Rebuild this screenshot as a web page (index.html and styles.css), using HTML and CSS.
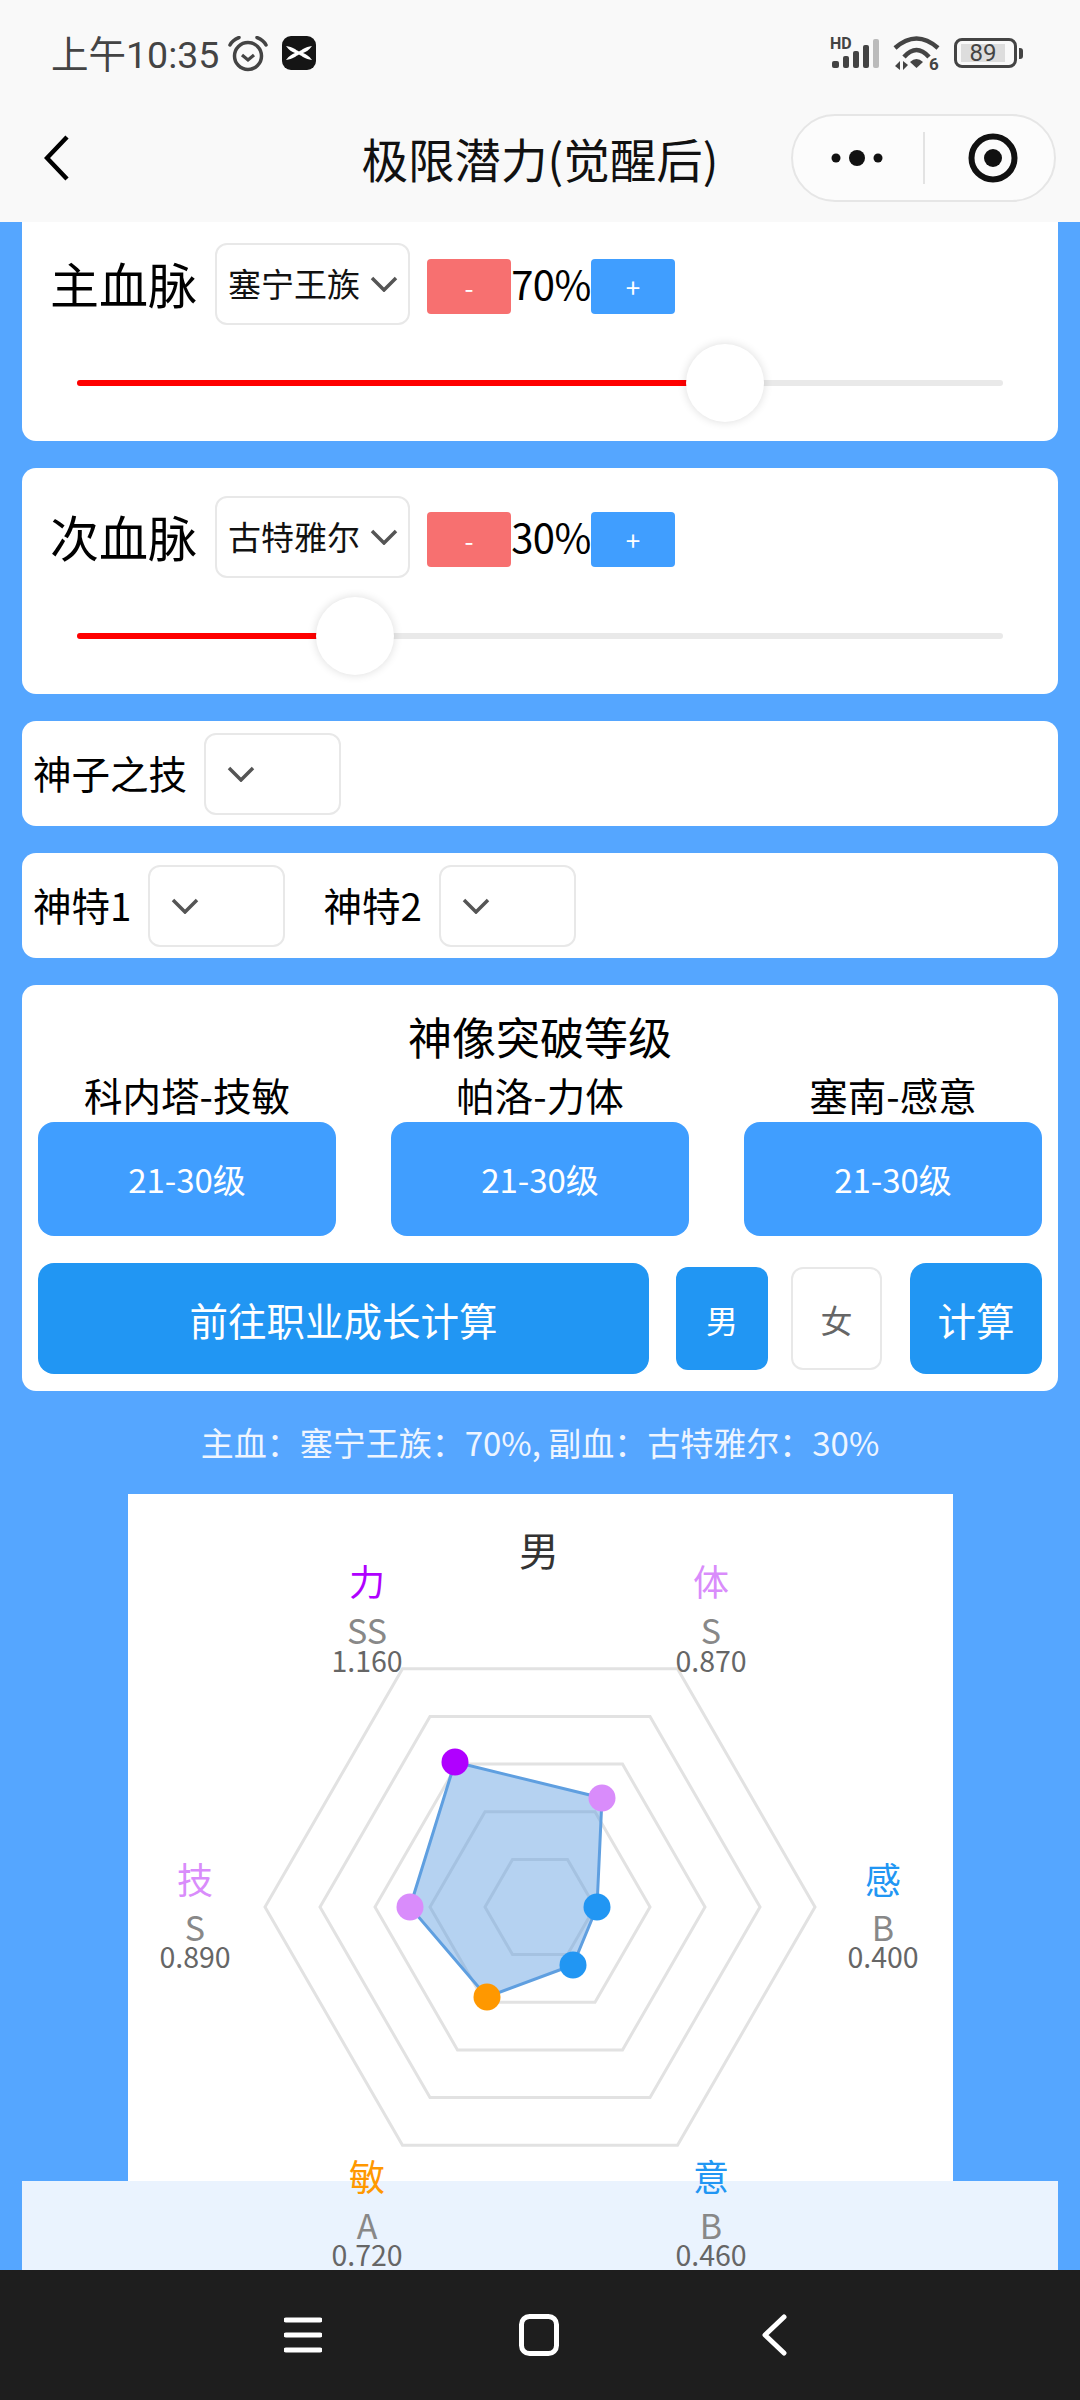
FILE: index.html
```html
<!DOCTYPE html>
<html lang="zh-CN">
<head>
<meta charset="utf-8">
<title>极限潜力(觉醒后)</title>
<link rel="stylesheet" href="styles.css">
</head>
<body>
<header class="header">
  <div class="status">
    <span class="time">上午10:35</span>
    <svg class="ic-alarm" viewBox="0 0 40 36" width="40" height="36"><circle cx="20" cy="20" r="13.500" fill="none" stroke="#444" stroke-width="3.500"/><path d="M14 19l6 5 6-5" fill="none" stroke="#444" stroke-width="3.200"/><path d="M2 9C4 5 7 3 11 1.500M38 9C36 5 33 3 29 1.500" fill="none" stroke="#444" stroke-width="3.500" stroke-linecap="round"/></svg>
    <svg class="ic-x" viewBox="0 0 34 34" width="34" height="34"><rect width="34" height="34" rx="9" fill="#151515"/><path d="M4 10C11 11 14 14 17 15.500C20 14 23 11 30 10C27 14 24 16 21 17C24 18 27 20 30 24C23 23 20 20 17 18.500C14 20 11 23 4 24C7 20 10 18 13 17C10 16 7 14 4 10Z" fill="#fff"/></svg>
    <div class="status-right">
      <svg class="ic-signal" viewBox="0 0 50 32" width="50" height="32"><text class="hd" x="0" y="12">HD</text><rect x="2" y="24" width="7" height="7" rx="2" fill="#444"/><rect x="13" y="19" width="6" height="12" rx="2" fill="#444"/><rect x="23" y="14" width="6" height="17" rx="2" fill="#444"/><rect x="33" y="8" width="6" height="23" rx="2" fill="#444"/><rect x="43" y="2" width="6" height="29" rx="2" fill="#bbb"/></svg>
      <svg class="ic-wifi" viewBox="0 0 47 36" width="47" height="36"><path d="M2 13Q23.500 -6 45 13" fill="none" stroke="#444" stroke-width="4.500"/><path d="M11 22Q23.500 8 36 22" fill="none" stroke="#444" stroke-width="4.500"/><path d="M17 27Q23.500 21 30 27L23.500 33Z" fill="#444"/><path d="M7 26v9l-5-4zM10 35v-9l5 4z" fill="#444"/><text class="wf6" x="36" y="35">6</text></svg>
      <div class="battery"><div class="battery-body"><span class="battery-val">89</span></div><div class="battery-tip"></div></div>
    </div>
  </div>
  <div class="titlebar">
    <svg class="ic-back" viewBox="0 0 26 46" width="26" height="46"><path d="M23 2L3 23L23 44" fill="none" stroke="#000" stroke-width="4.500"/></svg>
    <h1 class="title">极限潜力(觉醒后)</h1>
    <div class="capsule">
      <svg class="cap-dots" viewBox="0 0 52 18" width="52" height="18"><circle cx="5" cy="9" r="4.500" fill="#111"/><circle cx="26" cy="9" r="8" fill="#111"/><circle cx="47" cy="9" r="4.500" fill="#111"/></svg>
      <span class="cap-div"></span>
      <svg class="cap-target" viewBox="0 0 50 50" width="50" height="50"><circle cx="25" cy="25" r="21.500" fill="none" stroke="#111" stroke-width="6"/><circle cx="25" cy="25" r="9" fill="#111"/></svg>
    </div>
  </div>
</header>

<main class="main">
  <section class="card blood first">
    <div class="blood-row">
      <span class="blood-name">主血脉</span>
      <div class="select wide"><span class="select-text">塞宁王族</span><svg class="chev" viewBox="0 0 28 16" width="28" height="16"><path d="M2 2L14 14L26 2" fill="none" stroke="#555" stroke-width="3.500"/></svg></div>
      <button class="step minus">-</button><span class="pct">70%</span><button class="step plus">+</button>
    </div>
    <div class="slider"><div class="track"><div class="fill" style="width:70%"></div><div class="thumb" style="left:70%"></div></div></div>
  </section>

  <section class="card blood">
    <div class="blood-row">
      <span class="blood-name">次血脉</span>
      <div class="select wide"><span class="select-text">古特雅尔</span><svg class="chev" viewBox="0 0 28 16" width="28" height="16"><path d="M2 2L14 14L26 2" fill="none" stroke="#555" stroke-width="3.500"/></svg></div>
      <button class="step minus">-</button><span class="pct">30%</span><button class="step plus">+</button>
    </div>
    <div class="slider"><div class="track"><div class="fill" style="width:30%"></div><div class="thumb" style="left:30%"></div></div></div>
  </section>

  <section class="card pick">
    <span class="pick-label">神子之技</span>
    <div class="select narrow"><svg class="chev" viewBox="0 0 28 16" width="28" height="16"><path d="M2 2L14 14L26 2" fill="none" stroke="#555" stroke-width="3.500"/></svg></div>
  </section>

  <section class="card pick">
    <span class="pick-label">神特1</span>
    <div class="select narrow"><svg class="chev" viewBox="0 0 28 16" width="28" height="16"><path d="M2 2L14 14L26 2" fill="none" stroke="#555" stroke-width="3.500"/></svg></div>
    <span class="pick-label second">神特2</span>
    <div class="select narrow"><svg class="chev" viewBox="0 0 28 16" width="28" height="16"><path d="M2 2L14 14L26 2" fill="none" stroke="#555" stroke-width="3.500"/></svg></div>
  </section>

  <section class="card statue">
    <h2 class="statue-title">神像突破等级</h2>
    <div class="statue-cols">
      <div class="col"><div class="col-label">科内塔-技敏</div><button class="lvl">21-30级</button></div>
      <div class="col"><div class="col-label">帕洛-力体</div><button class="lvl">21-30级</button></div>
      <div class="col"><div class="col-label">塞南-感意</div><button class="lvl">21-30级</button></div>
    </div>
    <div class="actions">
      <button class="act goto">前往职业成长计算</button>
      <button class="sex male">男</button>
      <button class="sex female">女</button>
      <button class="act calc">计算</button>
    </div>
  </section>

  <p class="summary">主血：塞宁王族：70%, 副血：古特雅尔：30%</p>

  <div class="chart">
    <svg class="radar" viewBox="128 1494 825 687" width="825" height="687">
      <g class="grid">
        <polygon points="265,1907 402.500,1668.800 677.500,1668.800 815,1907 677.500,2145.200 402.500,2145.200"/>
        <polygon points="320,1907 430,1716.500 650,1716.500 760,1907 650,2097.500 430,2097.500"/>
        <polygon points="375,1907 457.500,1764.100 622.500,1764.100 705,1907 622.500,2049.900 457.500,2049.900"/>
        <polygon points="430,1907 485,1811.700 595,1811.700 650,1907 595,2002.300 485,2002.300"/>
        <polygon points="485,1907 512.500,1859.400 567.500,1859.400 595,1907 567.500,1954.600 512.500,1954.600"/>
      </g>
      <polygon class="area" points="455,1762 602,1798 597,1907 573,1965 487,1997 410,1907"/>
      <circle class="pt-li" cx="455" cy="1762" r="13.500"/>
      <circle class="pt-ti" cx="602" cy="1798" r="13.500"/>
      <circle class="pt-gan" cx="597" cy="1907" r="13.500"/>
      <circle class="pt-gan" cx="573" cy="1965" r="13.500"/>
      <circle class="pt-min" cx="487" cy="1997" r="13.500"/>
      <circle class="pt-ti" cx="410" cy="1907" r="13.500"/>

      <text class="chart-title" x="539" y="1566">男</text>

      <text class="axis c-li" x="367" y="1596">力</text><text class="grade" x="367" y="1644">SS</text><text class="val" x="367" y="1672">1.160</text>
      <text class="axis c-ti" x="711" y="1596">体</text><text class="grade" x="711" y="1644">S</text><text class="val" x="711" y="1672">0.870</text>
      <text class="axis c-ti" x="195" y="1894">技</text><text class="grade" x="195" y="1941">S</text><text class="val" x="195" y="1968">0.890</text>
      <text class="axis c-gan" x="883" y="1894">感</text><text class="grade" x="883" y="1941">B</text><text class="val" x="883" y="1968">0.400</text>
      <text class="axis c-min" x="367" y="2191">敏</text><text class="grade" x="367" y="2239">A</text><text class="val" x="367" y="2266">0.720</text>
      <text class="axis c-gan" x="711" y="2191">意</text><text class="grade" x="711" y="2239">B</text><text class="val" x="711" y="2266">0.460</text>
    </svg>
  </div>
  <div class="panel"></div>
</main>

<nav class="navbar">
  <svg class="nav-menu" viewBox="0 0 38 36" width="38" height="36"><path d="M2 3H36M2 18H36M2 33H36" stroke="#fff" stroke-width="5" stroke-linecap="round"/></svg>
  <svg class="nav-home" viewBox="0 0 40 42" width="40" height="42"><rect x="2.500" y="2.500" width="35" height="37" rx="8" fill="none" stroke="#fff" stroke-width="5"/></svg>
  <svg class="nav-back" viewBox="0 0 26 42" width="26" height="42"><path d="M23 3L4 21L23 39" fill="none" stroke="#fff" stroke-width="5" stroke-linecap="round" stroke-linejoin="round"/></svg>
</nav>
</body>
</html>
```

FILE: styles.css
```css
* { box-sizing: border-box; }
html, body { margin: 0; padding: 0; }
body {
  width: 1080px;
  height: 2400px;
  overflow: hidden;
  display: flex;
  flex-direction: column;
  background: #55a6ff;
  font-family: "Noto Sans CJK SC", "Noto Sans", sans-serif;
  color: #000;
}
button { font-family: inherit; border: 0; padding: 0; margin: 0; }

/* header */
.header { height: 222px; flex: none; background: #f9f9f9; }
.status { height: 106px; display: flex; align-items: center; padding: 0 57px 0 51px; }
.time { font-family: Roboto, "Noto Sans CJK SC", sans-serif; font-size: 37.500px; color: #444; white-space: nowrap; padding-bottom: 3px; }
.ic-alarm { margin-left: 9px; margin-top: 2px; }
.ic-x { margin-left: 14px; }
.status-right { margin-left: auto; display: flex; align-items: center; }
.hd { font: 700 16px Roboto, sans-serif; fill: #444; }
.wf6 { font: 700 17px Roboto, sans-serif; fill: #444; }
.ic-wifi { margin-left: 13px; }
.battery { margin-left: 14px; display: flex; align-items: center; }
.battery-body { width: 63px; height: 30px; border: 3px solid #444; border-radius: 8px; padding: 3px 4px; }
.battery-val { display: block; width: 44px; height: 18px; background: #ddd; font: 24px/18px Roboto, sans-serif; color: #444; text-align: center; }
.battery-tip { width: 4px; height: 11px; background: #444; border-radius: 0 3px 3px 0; margin-left: 2px; }

.titlebar { height: 104px; display: grid; grid-template-columns: 1fr auto 1fr; align-items: center; }
.ic-back { margin-left: 44px; }
.title { margin: 0; font-size: 46.500px; font-weight: 400; color: #111; line-height: 60px; white-space: nowrap; }
.capsule {
  justify-self: end;
  margin-right: 24px;
  width: 265px;
  height: 88px;
  border: 2px solid #e6e6e6;
  border-radius: 44px;
  background: #fcfcfc;
  display: flex;
  align-items: center;
}
.cap-dots { margin-left: 38px; }
.cap-div { width: 2px; height: 52px; background: #e3e3e3; margin-left: 40px; }
.cap-target { margin-left: 43px; }

/* content */
.main { flex: 1; min-height: 0; overflow: hidden; padding: 0 22px; display: flex; flex-direction: column; }
.card { flex: none; background: #fff; border-radius: 14px; margin-bottom: 27px; }

.blood { padding-top: 28px; }
.blood.first { padding-top: 21px; border-radius: 0 0 14px 14px; }
.blood-row { height: 82px; display: flex; align-items: center; padding-left: 28px; }
.blood-name { font-size: 49px; line-height: 60px; width: 147px; padding-bottom: 3px; box-sizing: content-box; white-space: nowrap; }
.select {
  height: 82px;
  border: 2px solid #e8e8e8;
  border-radius: 12px;
  background: #fff;
  display: flex;
  align-items: center;
  flex: none;
}
.select.wide { width: 195px; margin-left: 18px; padding-left: 11px; }
.select.narrow { width: 137px; margin-left: 17px; padding-left: 21px; }
.select-text { font-size: 33px; width: 142px; white-space: nowrap; color: #111; padding-bottom: 2px; }
.chev { flex: none; }
.step { width: 84px; height: 55px; border-radius: 4px; color: #fff; font-size: 26px; line-height: 55px; text-align: center; margin-top: 5px; flex: none; }
.minus { background: #f77070; margin-left: 17px; }
.plus { background: #409eff; }
.pct { width: 80px; text-align: center; font-size: 40px; line-height: 50px; white-space: nowrap; letter-spacing: -0.500px; padding-bottom: 3px; box-sizing: content-box; }

.slider { height: 116px; display: flex; align-items: center; padding: 0 55px; }
.track { position: relative; width: 100%; height: 6px; background: #e9e9e9; border-radius: 3px; }
.fill { height: 100%; background: #f00; border-radius: 3px; }
.thumb { position: absolute; top: 3px; width: 78px; height: 78px; margin: -39px 0 0 -39px; border-radius: 50%; background: #fff; box-shadow: 0 0 10px rgba(0, 0, 0, 0.14); }

.pick { height: 105px; display: flex; align-items: center; padding-left: 11px; }
.pick-label { font-size: 38.500px; line-height: 50px; white-space: nowrap; padding-bottom: 3px; box-sizing: content-box; }
.pick-label.second { margin-left: 38px; }

.statue { height: 406px; padding: 25px 16px 0; }
.statue-title { margin: 0; font-size: 44px; font-weight: 400; line-height: 52px; text-align: center; }
.statue-cols { margin-top: 5px; display: flex; justify-content: space-between; }
.col { width: 298px; text-align: center; }
.col-label { font-size: 38.500px; line-height: 54px; white-space: nowrap; padding-bottom: 1px; box-sizing: content-box; }
.lvl { display: block; width: 298px; height: 114px; border-radius: 16px; background: #409eff; color: #fff; font-size: 33px; }
.actions { margin-top: 27px; display: flex; align-items: center; }
.act { height: 111px; border-radius: 16px; background: #2196f3; color: #fff; font-size: 38.500px; flex: none; }
.goto { width: 611px; }
.calc { width: 132px; margin-left: 28px; }
.sex { width: 92px; height: 103px; border-radius: 12px; font-size: 32px; flex: none; }
.male { background: #2196f3; color: #fff; margin-left: 27px; }
.female { width: 91px; background: #fff; color: #666; border: 2px solid #e8e8e8; margin-left: 23px; }

.summary { margin: -27px 0 0; height: 103px; flex: none; padding-top: 26px; text-align: center; color: #eef5ff; font-size: 33px; line-height: 50px; white-space: nowrap; }

.chart { position: relative; z-index: 1; flex: none; width: 825px; height: 687px; margin-left: 106px; background: #fff; }
.radar { display: block; overflow: visible; }
.grid polygon { fill: none; stroke: #e2e2e2; stroke-width: 3; }
.area { fill: rgba(90, 155, 225, 0.45); stroke: #5f9fe0; stroke-width: 3; }
.pt-li { fill: #b000ff; }
.pt-ti { fill: #d98cfb; }
.pt-gan { fill: #2196f3; }
.pt-min { fill: #ff9800; }
.radar text { text-anchor: middle; }
.chart-title { font-size: 40px; fill: #333; }
.axis { font-size: 36px; }
.c-li { fill: #b000ff; }
.c-ti { fill: #d98cfb; }
.c-gan { fill: #2196f3; }
.c-min { fill: #ff9800; }
.grade { font-size: 34px; fill: #888; }
.val { font-size: 28.500px; fill: #666; }
.panel { flex: 1; min-height: 0; background: #eaf3fe; }

/* system nav */
.navbar { height: 130px; flex: none; background: #1e1e1e; display: flex; align-items: center; padding-left: 284px; }
.nav-home { margin-left: 197px; }
.nav-back { margin-left: 202px; }
```
